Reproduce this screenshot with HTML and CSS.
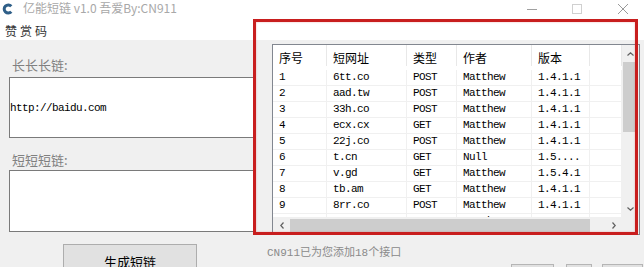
FILE: index.html
```html
<!DOCTYPE html>
<html lang="zh-CN">
<head>
  <meta charset="UTF-8">
  <title>亿能短链 v1.0</title>
  <link rel="stylesheet" href="styles.css">
</head>
<body>

<!-- title bar -->
<div class="titlebar">
  <svg class="app-icon" viewBox="0 0 12 12"><path d="M9.3 3.2 A4.1 4.1 0 1 0 9.3 8.8" fill="none" stroke="#2f5f88" stroke-width="3"/></svg>
  <span class="title">亿能短链 v1.0 吾爱By:CN911</span>
  <div class="win-ctrls">
    <svg class="ctrl min" viewBox="0 0 10 10"><path d="M0 5.5 H10" stroke="#a0a0a0" stroke-width="1"/></svg>
    <svg class="ctrl max" viewBox="0 0 10 10"><rect x="0.5" y="0.5" width="9" height="9" fill="none" stroke="#d0d0d0"/></svg>
    <svg class="ctrl close" viewBox="0 0 10 10"><path d="M0 0 L10 10 M10 0 L0 10" stroke="#9a9a9a" stroke-width="1"/></svg>
  </div>
</div>

<div class="menubar"><span>赞赏码</span></div>

<div class="main">
  <!-- left: input / output -->
  <div class="left">
    <div class="label">长长长链:</div>
    <div class="textbox long">http://baidu.com</div>
    <div class="label second">短短短链:</div>
    <div class="textbox short"></div>
    <button class="gen-btn">生成短链</button>
  </div>

  <!-- right: api list -->
  <div class="right">
    <div class="list">
      <div class="grid-body">
        <div class="row head"><span>序号</span><span>短网址</span><span>类型</span><span>作者</span><span>版本</span><span></span></div>
        <div class="row"><span>1</span><span>6tt.co</span><span>POST</span><span>Matthew</span><span>1.4.1.1</span><span></span></div>
        <div class="row"><span>2</span><span>aad.tw</span><span>POST</span><span>Matthew</span><span>1.4.1.1</span><span></span></div>
        <div class="row"><span>3</span><span>33h.co</span><span>POST</span><span>Matthew</span><span>1.4.1.1</span><span></span></div>
        <div class="row"><span>4</span><span>ecx.cx</span><span>GET</span><span>Matthew</span><span>1.4.1.1</span><span></span></div>
        <div class="row"><span>5</span><span>22j.co</span><span>POST</span><span>Matthew</span><span>1.4.1.1</span><span></span></div>
        <div class="row"><span>6</span><span>t.cn</span><span>GET</span><span>Null</span><span>1.5....</span><span></span></div>
        <div class="row"><span>7</span><span>v.gd</span><span>GET</span><span>Matthew</span><span>1.5.4.1</span><span></span></div>
        <div class="row"><span>8</span><span>tb.am</span><span>GET</span><span>Matthew</span><span>1.4.1.1</span><span></span></div>
        <div class="row"><span>9</span><span>8rr.co</span><span>POST</span><span>Matthew</span><span>1.4.1.1</span><span></span></div>
        <div class="row"><span>10</span><span>mrw.so</span><span>GET</span><span>Matthew</span><span>1.4.1.1</span><span></span></div>
      </div>
      <div class="vscroll">
        <div class="sb-btn"><svg viewBox="0 0 7 4"><path d="M0.5 3.5 L3.5 0.8 L6.5 3.5" fill="none" stroke="#606060" stroke-width="1.2"/></svg></div>
        <div class="v-thumb"></div>
        <div class="sb-btn end"><svg viewBox="0 0 7 4"><path d="M0.5 0.5 L3.5 3.2 L6.5 0.5" fill="none" stroke="#606060" stroke-width="1.2"/></svg></div>
      </div>
      <div class="hscroll">
        <div class="sb-btn"><svg class="h" viewBox="0 0 4 7"><path d="M3.5 0.5 L0.8 3.5 L3.5 6.5" fill="none" stroke="#606060" stroke-width="1.2"/></svg></div>
        <div class="h-thumb"></div>
        <div class="sb-btn end"><svg class="h" viewBox="0 0 4 7"><path d="M0.5 0.5 L3.2 3.5 L0.5 6.5" fill="none" stroke="#606060" stroke-width="1.2"/></svg></div>
      </div>
      <div class="corner"></div>
    </div>
    <div class="status">CN911已为您添加18个接口</div>
    <div class="bottom-btns"><span class="b1"></span><span class="b2"></span><span class="b3"></span></div>
  </div>
</div>

<!-- red annotation box -->
<div class="highlight"></div>

</body>
</html>
```

FILE: styles.css
```css
* { margin: 0; padding: 0; box-sizing: border-box; }
body { width: 644px; height: 267px; overflow: hidden; position: relative; background: #f0f0f0; color: #000; font-family: "Noto Sans CJK SC", sans-serif; font-size: 12px; }

.titlebar { display: flex; align-items: flex-start; height: 20px; background: #fff; }
.app-icon { width: 12px; height: 12px; margin: 3px 0 0 2px; }
.title { margin-left: 9px; line-height: 16px; color: #a8a8a8; }
.win-ctrls { margin-left: auto; display: flex; padding-right: 16px; }
.ctrl { width: 10px; height: 10px; margin-top: 4px; }
.ctrl.max { margin-left: 35px; }
.ctrl.close { margin-left: 36px; }

.menubar { height: 20px; background: #fff; padding: 2px 0 0 5px; line-height: 18px; color: #333; letter-spacing: 3px; }

.main { display: flex; height: 227px; }

.left { width: 258px; padding: 16px 0 0 9px; }
.label { margin: 0 0 4px 3px; font-size: 13px; line-height: 17px; color: #808080; }
.label.second { margin-top: 13px; margin-bottom: 2px; }
.textbox { width: 245px; height: 61px; background: #fff; border: 1px solid #7a7a7a; display: flex; align-items: center; font-family: "Liberation Mono", monospace; font-size: 11px; letter-spacing: -0.6px; }
.textbox.short { height: 62px; }
.gen-btn { display: block; margin: 12px 0 0 54px; width: 134px; height: 36px; background: #e1e1e1; border: 1px solid #adadad; font-family: "Noto Sans CJK SC", sans-serif; font-size: 13px; line-height: 18px; color: #000; }

.right { flex: 1; display: flex; flex-direction: column; align-items: flex-start; }
.list { margin: 4px 0 0 14px; width: 368px; height: 191px; border: 1px solid #828790; background: #fff; display: grid; grid-template-columns: 349px 17px; grid-template-rows: 172px 17px; }
.grid-body { overflow: hidden; }
.row { display: grid; grid-template-columns: 54px 80px 50px 75px 58px 32px; height: 16px; border-bottom: 1px solid #f0f0f0; }
.row span { padding-left: 6px; border-right: 1px solid #f0f0f0; white-space: nowrap; overflow: hidden; font-family: "Liberation Mono", monospace; font-size: 11px; letter-spacing: -0.6px; line-height: 15px; }
.row.head { height: 25px; border-bottom: none; }
.row.head span { height: 21px; padding-top: 4px; border-right-color: #e8e8e8; font-family: "Noto Sans CJK SC", sans-serif; font-size: 12px; letter-spacing: 0; line-height: 17px; }

.vscroll { display: flex; flex-direction: column; background: #f0f0f0; }
.hscroll { display: flex; background: #f0f0f0; }
.sb-btn { width: 17px; height: 17px; flex: none; display: flex; align-items: center; justify-content: center; }
.sb-btn svg { width: 7px; height: 4px; }
.sb-btn svg.h { width: 4px; height: 7px; }
.vscroll .sb-btn.end { margin-top: auto; }
.hscroll .sb-btn.end { margin-left: auto; }
.v-thumb { height: 70px; margin: 0 1px; background: #cdcdcd; }
.h-thumb { width: 300px; margin: 2px 0; background: #cdcdcd; }
.corner { background: #f0f0f0; }

.status { margin: 10px 0 0 9px; font-family: "Liberation Mono", "Noto Sans CJK SC", monospace; font-size: 11px; line-height: 16px; color: #8a8a8a; }
.bottom-btns { align-self: stretch; display: flex; justify-content: flex-end; margin-top: 3px; padding-right: 1px; }
.bottom-btns span { height: 20px; background: #e1e1e1; border: 1px solid #b5b5b5; }
.bottom-btns .b1 { width: 43px; }
.bottom-btns .b2 { width: 26px; margin-left: 12px; }
.bottom-btns .b3 { width: 41px; margin-left: 10px; }

.highlight { position: absolute; left: 253px; top: 19px; width: 385px; height: 216px; border: 3px solid #c81e1e; box-shadow: inset 0 0 2px rgba(200, 30, 30, 0.35); }
```
